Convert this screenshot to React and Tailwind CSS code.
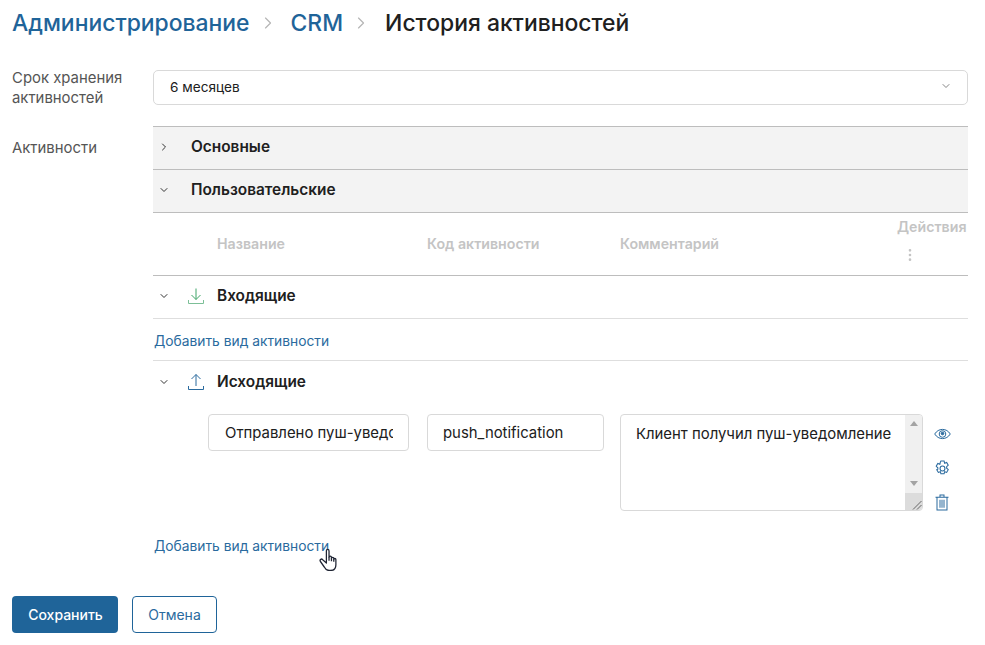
import React from "react";
import { ChevronRight, ChevronDown, MoreVertical } from "lucide-react";

const Down = () => <ChevronDown size={12} strokeWidth={2} className="text-[#333]" />;

function ActionIcons() {
  return (
    <div className="ml-[7px] flex w-[24px] flex-col items-center pt-[12px] text-[#2a6a9e]">
      <svg width="17" height="16" viewBox="0 0 17 16" fill="none" stroke="currentColor" strokeWidth="1">
        <path d="M.7 8C2.6 5 5.3 3.4 8.5 3.4S14.4 5 16.3 8c-1.9 3-4.6 4.6-7.8 4.6S2.600 11 .7 8Z" />
        <circle cx="8.500" cy="8" r="3.300" />
        <circle cx="8.500" cy="7.500" r="1.300" fill="currentColor" />
      </svg>
      <svg className="mt-[18px]" width="17" height="17" viewBox="0 0 16 16" fill="none" stroke="currentColor" strokeWidth="1">
        <path d="M6.500 1h3l.5 2 1.900-.7 1.500 2.600-1.500 1.400v1.400l1.500 1.400-1.500 2.600-1.900-.7-.5 2h-3l-.5-2-1.900.7-1.500-2.600L3.600 8.700V7.300L2.100 5.900l1.500-2.600 1.900.7.500-2Z" />
        <circle cx="8" cy="8" r="2.300" />
      </svg>
      <svg className="mt-[17px]" width="14" height="17" viewBox="0 0 14 16" preserveAspectRatio="none" fill="none" stroke="currentColor" strokeWidth="1">
        <path d="M.5 3h13M5 3V1h4v2M2 3v12h10V3M5 5.500v7.500M7 5.500v7.500M9 5.500v7.500" />
      </svg>
    </div>
  );
}

export default function App() {
  return (
    <div className="h-[645px] w-[985px] overflow-hidden bg-white pl-[12px] pr-[17px] font-['Inter',sans-serif] text-[14.9px] text-[#202020]">
      <div className="flex h-[46px] items-center text-[22.9px] font-medium">
        <span className="text-[#1f6499]">Администрирование</span>
        <ChevronRight size={20} strokeWidth={1.4} className="ml-[8px] mr-[13px] text-[#b5b5b5]" />
        <span className="text-[#1f6499]">CRM</span>
        <ChevronRight size={20} strokeWidth={1.4} className="ml-[8px] mr-[14px] text-[#b5b5b5]" />
        <span>История активностей</span>
      </div>

      <div className="mt-[24px] flex">
        <div className="-mt-[2px] w-[141px] leading-[20px] text-[#555]">Срок хранения<br />активностей</div>
        <div className="flex h-[35px] flex-1 items-center justify-between rounded-[5px] border border-[#d9d9d9] pb-[1px] pl-[16px] pr-[15px] text-[13.6px]">
          <span>6 месяцев</span>
          <ChevronDown size={12} strokeWidth={1.6} className="mb-[3px] text-[#666]" />
        </div>
      </div>

      <div className="mt-[18px] flex">
        <div className="w-[141px] pt-[12px] leading-[20px] text-[#555]">Активности</div>
        <div className="flex-1">
          <div className="flex h-[43px] items-center border-t border-[#bdbdbd] bg-[#f3f3f3] pb-[2px] pl-[5px]">
            <ChevronRight size={12} strokeWidth={2} className="text-[#333]" />
            <span className="ml-[21px] text-[15.4px] font-semibold">Основные</span>
          </div>
          <div className="flex h-[43px] items-center border-t border-[#bdbdbd] bg-[#f3f3f3] pb-[2px] pl-[5px]">
            <Down />
            <span className="ml-[21px] text-[15.4px] font-semibold">Пользовательские</span>
          </div>

          <div className="flex h-[64px] border-y border-y-[#bdbdbd] text-[14.2px] font-semibold text-[#c4c4c4]">
            <span className="ml-[64px] w-[210px] pt-[20px]">Название</span>
            <span className="w-[193px] pt-[20px]">Код активности</span>
            <span className="w-[277px] pt-[20px]">Комментарий</span>
            <div className="flex flex-col items-start pt-[3px]">
              <span>Действия</span>
              <MoreVertical size={16} strokeWidth={2} className="ml-[5px] mt-[10px] text-[#c4c4c4]" />
            </div>
          </div>

          <div className="flex h-[43px] items-center border-b border-[#dedede] pb-[3px] pl-[5px]">
            <Down />
            <svg className="ml-[17px]" width="18" height="18" viewBox="0 0 18 18" fill="none" strokeWidth="1">
              <path d="M9 1.500v11M4.500 8 9 12.500 13.500 8" stroke="#3fa568" />
              <path d="M1.500 13v3.500h15V13" stroke="#7cbf97" />
            </svg>
            <span className="ml-[12px] text-[15.4px] font-semibold">Входящие</span>
          </div>
          <div className="flex h-[42px] items-center border-b border-[#dedede] pl-[1px] pt-[3px] text-[13.8px] text-[#2a6a9e]">Добавить вид активности</div>
          <div className="flex h-[43px] items-center pb-[2px] pl-[5px]">
            <Down />
            <svg className="ml-[17px]" width="18" height="18" viewBox="0 0 18 18" fill="none" stroke="#2a6a9e" strokeWidth="1">
              <path d="M9 13V1.500M4.500 6 9 1.500 13.500 6" />
              <path d="M1.500 13v3.500h15V13" />
            </svg>
            <span className="ml-[12px] text-[15.4px] font-semibold">Исходящие</span>
          </div>

          <div className="mt-[10px] flex items-start">
            <div className="ml-[55px] flex h-[37px] w-[201px] items-center overflow-hidden whitespace-nowrap rounded-[4px] border border-[#d9d9d9] pl-[16px] pr-[15px] pt-[2px]">
              <span className="w-full overflow-hidden">Отправлено пуш-уведомление</span>
            </div>
            <div className="ml-[18px] flex h-[37px] w-[177px] items-center rounded-[4px] border border-[#d9d9d9] pl-[15px] pt-[2px]">push_notification</div>
            <div className="ml-[16px] flex h-[97px] w-[303px] overflow-hidden rounded-[4px] border border-[#d9d9d9]">
              <div className="flex-1 pl-[15px] pt-[9px] leading-[20px]">Клиент получил пуш-уведомление</div>
              <div className="flex w-[17px] flex-col items-center justify-between bg-[#f0f0f0]">
                <div className="mt-[6px] h-0 w-0 border-x-[4px] border-b-[5px] border-x-transparent border-b-[#a3a3a3]" />
                <div className="flex w-full flex-col items-center">
                  <div className="mb-[7px] h-0 w-0 border-x-[4px] border-t-[5px] border-x-transparent border-t-[#a3a3a3]" />
                  <div className="flex h-[17px] w-full items-end justify-end bg-[#dcdcdc]">
                    <svg width="12" height="12" viewBox="0 0 12 12" stroke="#666" strokeWidth="1"><path d="M3 11.500 11.500 3M7 11.500l4.500-4.500" /></svg>
                  </div>
                </div>
              </div>
            </div>
            <ActionIcons />
          </div>

          <div className="relative mt-[25px] flex h-[20px] items-center pl-[1px] text-[13.8px] text-[#2a6a9e]">
            Добавить вид активности
            <svg className="absolute left-[166px] top-[12px]" width="19" height="23" viewBox="0 0 18 20" preserveAspectRatio="none" fill="#fff" stroke="#1f2433" strokeWidth="1.200" strokeLinejoin="round">
              <path d="M7 2.500c0-1.700 2.500-1.700 2.500 0V8c0-1.300 2.300-1.300 2.300 0v1c0-1.200 2.200-1.200 2.200 0v1c0-1.200 2-1.200 2 0v4.500c0 3-2 5-5 5H9.500c-2.500 0-3.500-1.200-4.500-3l-3.800-5c-.8-1.500 1.200-2.500 2.300-1.300L7 13Z" />
              <path d="M9.500 8v3M11.800 9v2.500M14 10v2" fill="none" />
            </svg>
          </div>
        </div>
      </div>

      <div className="mt-[40px] flex gap-[14px] text-[14px]">
        <div className="flex h-[37px] w-[106px] items-center justify-center rounded-[4px] bg-[#1f6499] pl-[1px] font-medium text-white">Сохранить</div>
        <div className="flex h-[37px] w-[85px] items-center justify-center rounded-[4px] border border-[#1f6499] text-[#2a6a9e]">Отмена</div>
      </div>
    </div>
  );
}
